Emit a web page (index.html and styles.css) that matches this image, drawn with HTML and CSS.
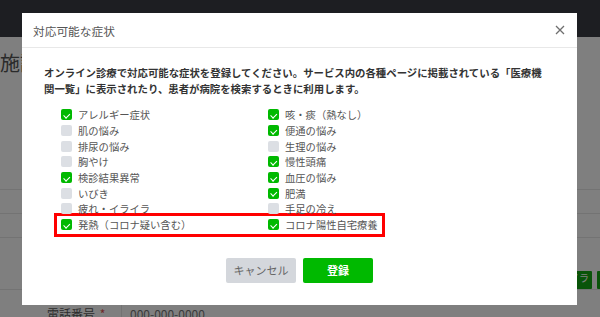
FILE: index.html
```html
<!DOCTYPE html>
<html lang="ja">
<head>
    <meta charset="UTF-8">
    <meta name="viewport" content="width=device-width, initial-scale=1.0">
    <title>対応可能な症状</title>
    <link rel="stylesheet" href="styles.css">
</head>
<body>
    <!-- 背景のページ -->
    <div class="page">
        <div class="topbar"></div>
        <h1 class="page-title">施設情報</h1>

        <div class="form">
            <div class="form-row row-a">
                <div class="form-label"></div>
                <div class="form-value"></div>
            </div>
            <div class="form-row row-b">
                <div class="form-label"></div>
                <div class="form-value"></div>
            </div>
            <div class="form-row row-tags">
                <div class="form-label"></div>
                <div class="form-value tags">
                    <span class="tag">アレルギー症状</span>
                    <span class="tag">咳・痰（熱なし）</span>
                    <span class="tag">便通の悩み</span>
                    <span class="tag">慢性頭痛</span>
                    <span class="tag">検診結果異常</span>
                    <span class="tag">肥満</span>
                    <span class="tag">疲れ・イライラ</span>
                    <span class="tag">手足の冷え</span>
                </div>
            </div>
            <div class="form-row row-phone">
                <div class="form-label">電話番号 <span class="req">*</span></div>
                <div class="form-value phone">000-000-0000</div>
            </div>
        </div>
    </div>

    <!-- モーダル -->
    <div class="overlay"></div>
    <div class="modal">
        <div class="modal-head">
            <span class="modal-title">対応可能な症状</span>
            <svg class="close" width="10" height="10" viewBox="0 0 10 10">
                <path d="M1 1 L9 9 M9 1 L1 9" stroke="#6f6f6f" stroke-width="1.3" fill="none"/>
            </svg>
        </div>

        <div class="modal-body">
            <p class="lead">オンライン診療で対応可能な症状を登録してください。サービス内の各種ページに掲載されている「医療機関一覧」に表示されたり、患者が病院を検索するときに利用します。</p>

            <div class="checks">
                <div class="check on"><span class="box"></span>アレルギー症状</div>
                <div class="check on"><span class="box"></span>咳・痰（熱なし）</div>
                <div class="check"><span class="box"></span>肌の悩み</div>
                <div class="check on"><span class="box"></span>便通の悩み</div>
                <div class="check"><span class="box"></span>排尿の悩み</div>
                <div class="check"><span class="box"></span>生理の悩み</div>
                <div class="check"><span class="box"></span>胸やけ</div>
                <div class="check on"><span class="box"></span>慢性頭痛</div>
                <div class="check on"><span class="box"></span>検診結果異常</div>
                <div class="check on"><span class="box"></span>血圧の悩み</div>
                <div class="check"><span class="box"></span>いびき</div>
                <div class="check on"><span class="box"></span>肥満</div>
                <div class="check"><span class="box"></span>疲れ・イライラ</div>
                <div class="check"><span class="box"></span>手足の冷え</div>
            </div>

            <!-- 新しく追加された項目 -->
            <div class="checks highlight">
                <div class="check on"><span class="box"></span>発熱（コロナ疑い含む）</div>
                <div class="check on"><span class="box"></span>コロナ陽性自宅療養</div>
            </div>

            <div class="actions">
                <button class="btn btn-cancel">キャンセル</button>
                <button class="btn btn-ok">登録</button>
            </div>
        </div>
    </div>
</body>
</html>
```

FILE: styles.css
```css
body{
  margin: 0;
  background-color: white;
  font-family: "Noto Sans CJK JP", "Noto Sans", sans-serif;
  overflow: hidden;
}

/* 背景のページ */
.topbar{
  height: 37px;
  background-color: #3b3d44;
}

.page-title{
  margin: 14px 0 0 0;
  font-size: 20px;
  font-weight: normal;
  line-height: 24px;
  color: #555;
  white-space: nowrap;
}

.form{
  margin-top: 114px;
  border-top: 1px solid #e6e6e6;
}

.form-row{
  display: flex;
  border-bottom: 1px solid #e6e6e6;
}

.row-a{ height: 23px; }
.row-b{ height: 23px; }
.row-tags{ height: 51px; }
.row-phone{ height: 40px; }

.form-label{
  width: 74px;
  padding-left: 47px;
  border-right: 1px solid #e6e6e6;
  font-size: 12px;
  color: #5a5a5a;
  white-space: nowrap;
}

.row-phone .form-label,
.phone{
  padding-top: 15px;
}

.req{
  color: #e05050;
  margin-left: 2px;
}

.form-value{
  flex: 1;
  padding-left: 8px;
  overflow: hidden;
  white-space: nowrap;
}

.phone{
  font-size: 12px;
  color: #777;
}

.tags{
  display: flex;
  gap: 5px;
  padding-top: 33px;
}

.tag{
  background-color: #13a813;
  color: white;
  font-size: 10px;
  line-height: 13px;
  padding: 0 3px;
  border-radius: 1px;
  flex-shrink: 0;
}

/* モーダル */
.overlay{
  position: fixed;
  inset: 0;
  background-color: rgba(0, 0, 0, 0.5);
}

.modal{
  position: fixed;
  left: 22px;
  top: 13px;
  width: 555px;
  background-color: white;
}

.modal-head{
  height: 34px;
  display: flex;
  align-items: center;
  justify-content: space-between;
  padding: 0 12px 0 11px;
  border-bottom: 1px solid #e8e8e8;
}

.modal-title{
  font-size: 11.7px;
  color: #555;
}

.modal-body{
  padding: 17px 22px 22px 22px;
}

.lead{
  margin: 0;
  padding-right: 8px;
  font-size: 10.4px;
  line-height: 16px;
  font-weight: bold;
  color: #333;
}

.checks{
  display: grid;
  grid-template-columns: 207px auto;
  margin-left: 17px;
}

.checks:first-of-type{
  margin-top: 10px;
}

.check{
  display: flex;
  align-items: center;
  gap: 6px;
  height: 15.7px;
  font-size: 10.3px;
  color: #555;
  white-space: nowrap;
}

.box{
  width: 11px;
  height: 11px;
  border-radius: 2px;
  background-color: #dcdfe4;
  position: relative;
  flex-shrink: 0;
}

.check.on .box{
  background-color: #00b900;
}

.check.on .box::after{ /* チェックマーク */
  content: "";
  position: absolute;
  left: 3.5px;
  top: 2.5px;
  width: 2.5px;
  height: 4.5px;
  border: solid white;
  border-width: 0 1.3px 1.3px 0;
  transform: rotate(45deg);
}

.highlight{
  width: fit-content;
  margin: -4px 0 -4px 10px;
  padding: 1px 4px;
  border: 3px solid #ff0000;
}

.actions{
  display: flex;
  justify-content: center;
  gap: 7px;
  margin-top: 25px;
}

.btn{
  width: 70px;
  height: 25px;
  border: none;
  border-radius: 2px;
  font-family: "Noto Sans CJK JP", "Noto Sans", sans-serif;
  font-size: 11px;
}

.btn-cancel{
  background-color: #d4d7dc;
  color: #666;
}

.btn-ok{
  background-color: #00b900;
  color: white;
  font-weight: bold;
}
```
